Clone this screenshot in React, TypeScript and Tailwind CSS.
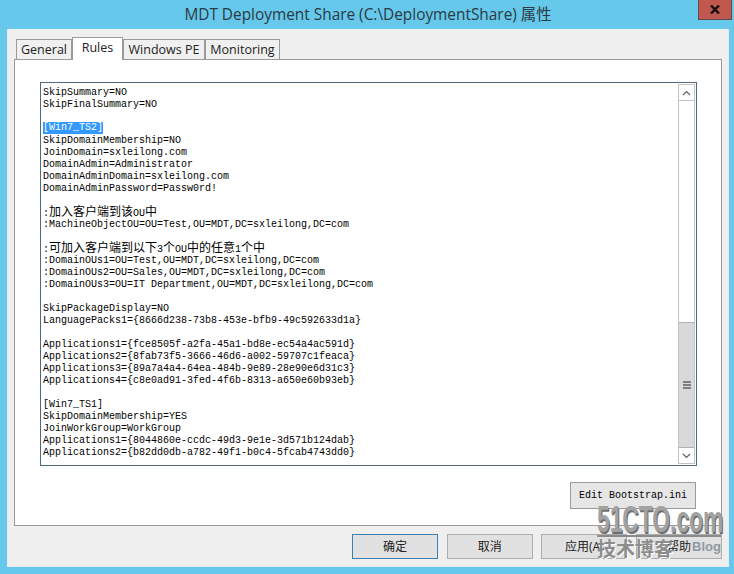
const lines = [
  "SkipSummary=NO",
  "SkipFinalSummary=NO",
  "",
  "[Win7_TS2]",
  "SkipDomainMembership=NO",
  "JoinDomain=sxleilong.com",
  "DomainAdmin=Administrator",
  "DomainAdminDomain=sxleilong.com",
  "DomainAdminPassword=Passw0rd!",
  "",
  ":加入客户端到该OU中",
  ":MachineObjectOU=OU=Test,OU=MDT,DC=sxleilong,DC=com",
  "",
  ":可加入客户端到以下3个OU中的任意1个中",
  ":DomainOUs1=OU=Test,OU=MDT,DC=sxleilong,DC=com",
  ":DomainOUs2=OU=Sales,OU=MDT,DC=sxleilong,DC=com",
  ":DomainOUs3=OU=IT Department,OU=MDT,DC=sxleilong,DC=com",
  "",
  "SkipPackageDisplay=NO",
  "LanguagePacks1={8666d238-73b8-453e-bfb9-49c592633d1a}",
  "",
  "Applications1={fce8505f-a2fa-45a1-bd8e-ec54a4ac591d}",
  "Applications2={8fab73f5-3666-46d6-a002-59707c1feaca}",
  "Applications3={89a7a4a4-64ea-484b-9e89-28e90e6d31c3}",
  "Applications4={c8e0ad91-3fed-4f6b-8313-a650e60b93eb}",
  "",
  "[Win7_TS1]",
  "SkipDomainMembership=YES",
  "JoinWorkGroup=WorkGroup",
  "Applications1={8044860e-ccdc-49d3-9e1e-3d571b124dab}",
  "Applications2={b82dd0db-a782-49f1-b0c4-5fcab4743dd0}",
];

const uiFont = "font-['Open_Sans','Noto_Sans_CJK_SC',sans-serif]";

function Tab({ label, width, active }: { label: string; width: string; active?: boolean }) {
  if (active) {
    return (
      <div className={`relative z-10 -mb-px h-[23px] border border-b-0 border-[#9a9a9a] bg-white pt-[1px] text-center text-[12.5px] text-[#222] ${width}`}>
        {label}
      </div>
    );
  }
  return (
    <div className={`h-[20px] border border-b-0 border-[#9a9a9a] bg-[#f0f0f0] text-center text-[12.5px] leading-[20px] text-[#222] ${width}`}>
      {label}
    </div>
  );
}

function DialogButton({ label, primary }: { label: string; primary?: boolean }) {
  return (
    <div
      className={`flex h-[25px] w-[86px] items-center justify-center border bg-[#e1e1e1] text-[12px] text-[#222] ${
        primary ? "border-[#3c7fb1]" : "border-[#adadad]"
      }`}
    >
      {label}
    </div>
  );
}

// CJK runs are 12px wide, the latin runs stay on the 6px grid
function CodeLine({ line }: { line: string }) {
  const parts = line.split(/([\u4e00-\u9fff]+)/);
  return (
    <>
      {parts.map((part, i) =>
        /[\u4e00-\u9fff]/.test(part) ? (
          <span key={i} className="text-[12px]">
            {part}
          </span>
        ) : (
          <span key={i}>{part}</span>
        )
      )}
    </>
  );
}

export default function App() {
  return (
    <div className={`relative flex h-[574px] w-[734px] flex-col overflow-hidden bg-[#66c8ea] pb-[7px] pl-[7px] pr-[5px] ${uiFont}`}>
      <div className="relative flex h-[29px] shrink-0 items-center justify-center text-[15.4px] text-[#2b3a44]">
        MDT Deployment Share (C:\DeploymentShare) 属性
        <div className="absolute right-[-3px] top-0 flex h-[20px] w-[34px] items-center justify-center border border-t-0 border-[#5f4a4a] bg-[#c0584f]">
          <svg width="10" height="9" viewBox="0 0 10 9">
            <path d="M1 0.5 L9 8.5 M9 0.5 L1 8.5" stroke="#111" strokeWidth="2.4" />
          </svg>
        </div>
      </div>

      <div className="flex min-h-0 flex-1 flex-col border-b border-l border-r border-[#e2eef2] bg-[#efefef] pl-[6px] pr-[6px] pt-[8px]">
        <div className="flex h-[22px] shrink-0 items-end pl-[2px]">
          <Tab label="General" width="w-[56px]" />
          <Tab label="Rules" width="w-[51px]" active />
          <Tab label="Windows PE" width="w-[82px]" />
          <Tab label="Monitoring" width="w-[75px]" />
        </div>

        <div className="flex h-[467px] shrink-0 flex-col border border-[#9a9a9a] bg-white pl-[25px] pr-[24px] pt-[22px]">
          <div className="flex h-[384px] shrink-0 border border-[#4f6a78] p-[1px]">
            <div className="min-w-0 flex-1 whitespace-pre pl-[1px] pt-[3px] font-['Liberation_Mono','Noto_Sans_CJK_SC',monospace] text-[10px] leading-[12px] text-black">
              {lines.map((line, i) => (
                <div key={i} className="h-[12px]">
                  {line === "[Win7_TS2]" ? (
                    <span className="relative -top-px inline-block h-[12px] bg-[#3399ff] text-white">{line}</span>
                  ) : (
                    <CodeLine line={line} />
                  )}
                </div>
              ))}
            </div>
            <div className="flex w-[17px] shrink-0 flex-col border border-[#c4c4c4] bg-white">
              <div className="flex h-[16px] shrink-0 items-center justify-center border-b border-[#c4c4c4]">
                <svg width="9" height="6" viewBox="0 0 9 6">
                  <path d="M1 5 L4.5 1.5 L8 5" fill="none" stroke="#606060" strokeWidth="1.2" />
                </svg>
              </div>
              <div className="flex-1" />
              <div className="flex h-[126px] shrink-0 items-center justify-center border-y border-[#b0b0b0] bg-[#d9d9d9]">
                <svg width="8" height="8" viewBox="0 0 8 8">
                  <path d="M0 1 H8 M0 4 H8 M0 7 H8" stroke="#606060" strokeWidth="1.4" />
                </svg>
              </div>
              <div className="flex h-[15px] shrink-0 items-center justify-center">
                <svg width="9" height="6" viewBox="0 0 9 6">
                  <path d="M1 1 L4.5 4.5 L8 1" fill="none" stroke="#606060" strokeWidth="1.2" />
                </svg>
              </div>
            </div>
          </div>

          <div className="mt-[16px] flex justify-end pr-[1px]">
            <div className="flex h-[27px] w-[126px] items-center justify-center border border-[#9a9a9a] bg-[#e6e6e6] font-['Liberation_Mono',monospace] text-[10px] text-black">
              Edit Bootstrap.ini
            </div>
          </div>
        </div>

        <div className="flex flex-1 items-start justify-end gap-[8.67px] pt-[8px]">
          <DialogButton label="确定" primary />
          <DialogButton label="取消" />
          <DialogButton label="应用(A)" />
          <DialogButton label="帮助" />
        </div>
      </div>

      {/* watermark sits over the buttons */}
      <div className="pointer-events-none absolute left-[597px] top-[506px] flex w-[124px] flex-col font-['Liberation_Sans','Noto_Sans_CJK_SC',sans-serif] text-[#a2a2a2]">
        <div className="scale-y-[1.6] whitespace-nowrap text-[22.8px] font-bold leading-[29px] [text-shadow:1px_1px_0_#6f6f6f]">
          51CTO.com
        </div>
        <div className="h-[2px] bg-[#8a8a8a]" />
        <div className="flex items-start justify-between">
          <span className="text-[19px] font-bold leading-[26px] text-[#8c8c8c] [text-shadow:1px_1px_0_#ffffff]">技术博客</span>
          <span className="text-[13px] font-bold leading-[20px] text-[#8d9aa4]">Blog</span>
        </div>
      </div>
    </div>
  );
}
